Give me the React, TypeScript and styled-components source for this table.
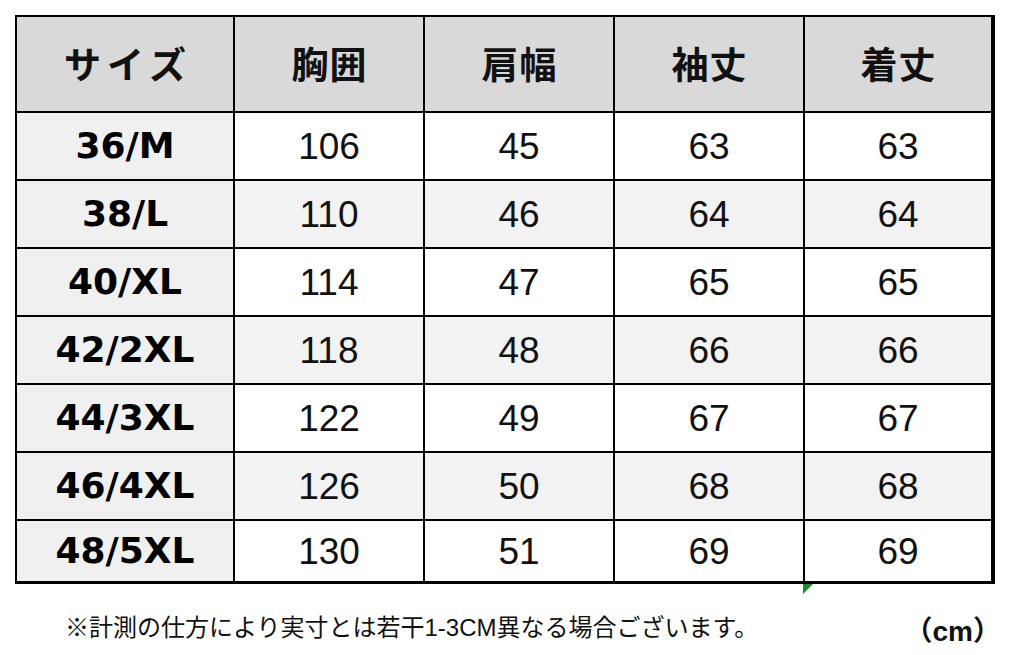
import React from "react";
import styled, { createGlobalStyle } from "styled-components";

const rows = [
  { size: "36/M", values: [106, 45, 63, 63] },
  { size: "38/L", values: [110, 46, 64, 64] },
  { size: "40/XL", values: [114, 47, 65, 65] },
  { size: "42/2XL", values: [118, 48, 66, 66] },
  { size: "44/3XL", values: [122, 49, 67, 67] },
  { size: "46/4XL", values: [126, 50, 68, 68] },
  { size: "48/5XL", values: [130, 51, 69, 69] },
];

const headers = ["胸囲", "肩幅", "袖丈", "着丈"];

const GlobalStyle = createGlobalStyle`
  html, body {
    margin: 0;
    background: #ffffff;
    overflow: hidden;
  }
  body {
    font-family: "Liberation Sans", "Noto Sans CJK JP", sans-serif;
    color: #000;
  }
`;

const Page = styled.div`
  padding: 15px 0 0 15px;
  width: 980px;
`;

const Grid = styled.div`
  display: grid;
  grid-template-columns: 216px 188px 188px 188px 186px;
  grid-template-rows: 94px repeat(6, 66px) 60px;
  gap: 2px;
  padding: 2px 4px 3px 2px;
  background: #000;
  position: relative;
`;

const HeadCell = styled.div<{ $spaced?: boolean }>`
  display: flex;
  align-items: center;
  justify-content: center;
  background: #d9d9d9;
  font-family: "Noto Sans CJK JP", sans-serif;
  font-weight: 700;
  font-size: 37px;
  letter-spacing: ${({ $spaced }) => ($spaced ? "6px" : "1px")};
  padding-left: ${({ $spaced }) => ($spaced ? "6px" : "1px")};
  padding-bottom: 3px;
  color: #111;
`;

const SizeCell = styled.div`
  display: flex;
  align-items: center;
  justify-content: center;
  background: #f0f0f0;
  font-family: "DejaVu Sans", sans-serif;
  font-weight: 700;
  font-size: 36px;
  color: #000;
  padding-bottom: 2px;
`;

const ValueCell = styled.div<{ $shade: boolean }>`
  display: flex;
  align-items: center;
  justify-content: center;
  background: ${({ $shade }) => ($shade ? "#f2f2f2" : "#ffffff")};
  font-family: "Liberation Sans", sans-serif;
  font-size: 37px;
  color: #111;
  padding-top: 2px;
`;

const Marker = styled.svg`
  position: absolute;
  left: 788px;
  top: 569px;
`;

const Footer = styled.div`
  display: flex;
  justify-content: space-between;
  align-items: center;
  padding: 17px 0 0 50px;
`;

const Note = styled.span`
  font-family: "Liberation Sans", "Noto Sans CJK JP", sans-serif;
  font-size: 24px;
  color: #111;
`;

const Unit = styled.span`
  font-family: "Liberation Sans", "Noto Sans CJK JP", sans-serif;
  font-weight: 700;
  font-size: 28px;
  color: #111;
  margin: 8px -6px 0 0;
`;

export default function App() {
  return (
    <>
      <GlobalStyle />
      <Page>
        <Grid>
          <HeadCell $spaced>サイズ</HeadCell>
          {headers.map((h) => (
            <HeadCell key={h}>{h}</HeadCell>
          ))}
          {rows.map((row, i) => (
            <React.Fragment key={row.size}>
              <SizeCell>{row.size}</SizeCell>
              {row.values.map((v, j) => (
                <ValueCell key={j} $shade={i % 2 === 1}>
                  {v}
                </ValueCell>
              ))}
            </React.Fragment>
          ))}
          <Marker width="12" height="12" viewBox="0 0 12 12">
            <polygon points="0,0 10,0 0,10" fill="#1e8a2a" />
          </Marker>
        </Grid>
        <Footer>
          <Note>※計測の仕方により実寸とは若干1-3CM異なる場合ございます。</Note>
          <Unit>（cm）</Unit>
        </Footer>
      </Page>
    </>
  );
}
